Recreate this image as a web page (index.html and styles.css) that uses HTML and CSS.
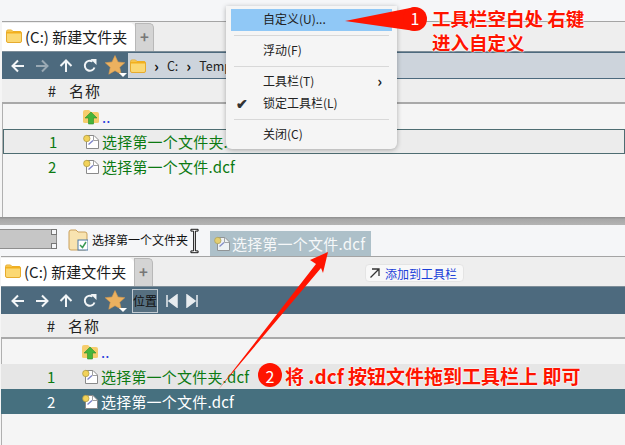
FILE: index.html
```html
<!DOCTYPE html>
<html lang="zh">
<head>
<meta charset="utf-8">
<title>工具栏</title>
<link rel="stylesheet" href="styles.css">
</head>
<body>
<svg class="defs" width="0" height="0">
  <defs>
    <symbol id="folder" viewBox="0 0 16 14">
      <path d="M.5 2.5Q.5 1 2 1H5.5L7 2.5H14Q15.5 2.5 15.5 4V12Q15.5 13.5 14 13.5H2Q.5 13.5 .5 12Z" fill="#fbd873" stroke="#e6ab2e"/>
      <path d="M1 3.5H15" stroke="#f2b01e" stroke-width="2"/>
    </symbol>
    <symbol id="dcf" viewBox="0 0 16 16">
      <path d="M3.500 1.500H11L15.500 6V14.500H3.500Z" fill="#fff" stroke="#8a8a8a"/>
      <path d="M10.500 1.500V6.500H15.500" fill="none" stroke="#a0a0a0"/>
      <circle cx="3.800" cy="4.500" r="3.200" fill="#f2d25a" stroke="#a9963e" stroke-width=".7"/>
      <path d="M5.500 10.500L10 6.500" stroke="#7b82c8" stroke-width="1.300"/>
    </symbol>
    <symbol id="up" viewBox="0 0 16 16">
      <path d="M0 3Q0 1 2 1H6L8 3H14Q16 3 16 5V13Q16 14 14 14H2Q0 14 0 13Z" fill="#f6cd6c"/>
      <path d="M8 3L14 9H10.500V15H5.500V9H2Z" fill="#47b53a" stroke="#2d8f2a" stroke-width=".6"/>
    </symbol>
    <symbol id="star" viewBox="0 0 20 20">
      <path d="M10 .5L13 7 19.800 7.700 14.700 12.300 16.200 19.200 10 15.700 3.800 19.200 5.300 12.300 .2 7.700 7 7Z" fill="#ecb15f" stroke="#d99c50" stroke-width=".6"/>
    </symbol>
    <symbol id="left" viewBox="0 0 14 14"><path d="M13 7H2M7 1.500L1.500 7 7 12.500" fill="none" stroke="currentColor" stroke-width="2"/></symbol>
    <symbol id="right" viewBox="0 0 14 14"><path d="M1 7H12M7 1.500L12.500 7 7 12.500" fill="none" stroke="currentColor" stroke-width="2"/></symbol>
    <symbol id="upar" viewBox="0 0 14 14"><path d="M7 13V2M1.500 7L7 1.500 12.500 7" fill="none" stroke="currentColor" stroke-width="2"/></symbol>
    <symbol id="refresh" viewBox="0 0 14 14"><path d="M11.500 8.500A5 5 0 1 1 9.500 2.500" fill="none" stroke="currentColor" stroke-width="2"/><path d="M7.500 0H13.500V6Z" fill="currentColor"/></symbol>
  </defs>
</svg>

<main class="app">
  <section class="pane first">
    <div class="topstrip"></div>
    <div class="tabs">
      <div class="tab"><svg class="i16"><use href="#folder"/></svg><span>(C:) 新建文件夹</span></div>
      <div class="plus">+</div>
    </div>
    <div class="toolbar">
      <svg class="nav"><use href="#left"/></svg>
      <svg class="nav dim"><use href="#right"/></svg>
      <svg class="nav"><use href="#upar"/></svg>
      <svg class="nav"><use href="#refresh"/></svg>
      <div class="fav"><svg class="star"><use href="#star"/></svg><i class="caret"></i></div>
      <div class="address">
        <svg class="i16"><use href="#folder"/></svg>
        <b class="sep">›</b><span>C:</span><b class="sep">›</b><span>Temp</span>
      </div>
    </div>
    <div class="head"><span class="num">#</span><span class="name">名称</span></div>
    <div class="row parent"><span class="num"></span><svg class="i16"><use href="#up"/></svg><span class="dots">..</span></div>
    <div class="row file framed"><span class="num">1</span><svg class="i16"><use href="#dcf"/></svg><span>选择第一个文件夹.dcf</span></div>
    <div class="row file"><span class="num">2</span><svg class="i16"><use href="#dcf"/></svg><span>选择第一个文件.dcf</span></div>
  </section>

  <div class="splitter"></div>

  <section class="pane second">
    <div class="dragbar">
      <div class="grip"></div>
      <div class="barbtn">
        <svg class="bigfolder" viewBox="0 0 20 22"><path d="M1 3Q1 1 3 1H8L10 3H17Q19 3 19 5V19Q19 21 17 21H3Q1 21 1 19Z" fill="#f8e3b0" stroke="#c9a05c"/><rect x="10" y="11" width="10" height="10" fill="#fff" stroke="#4d7aa5"/><path d="M12 16L14.500 18.500 18 13" fill="none" stroke="#3a9a55" stroke-width="1.500"/></svg>
        <span>选择第一个文件夹</span>
      </div>
      <svg class="cursor" viewBox="0 0 10 28"><path d="M1 1H9V3H6V25H9V27H1V25H4V3H1Z" fill="#fff" stroke="#000"/></svg>
      <div class="ghost"><svg class="i16"><use href="#dcf"/></svg><span>选择第一个文件.dcf</span></div>
    </div>
    <div class="tabs">
      <div class="tab"><svg class="i16"><use href="#folder"/></svg><span>(C:) 新建文件夹</span></div>
      <div class="plus">+</div>
    </div>
    <div class="toolbar">
      <svg class="nav"><use href="#left"/></svg>
      <svg class="nav"><use href="#right"/></svg>
      <svg class="nav"><use href="#upar"/></svg>
      <svg class="nav"><use href="#refresh"/></svg>
      <div class="fav"><svg class="star"><use href="#star"/></svg><i class="caret"></i></div>
      <div class="locbtn">位置</div>
      <svg class="skip" viewBox="0 0 12 14"><path d="M1 1V13M11 1V13L3 7Z" fill="#e8ecef" stroke="#e8ecef" stroke-width="1.500"/></svg>
      <svg class="skip" viewBox="0 0 12 14"><path d="M11 1V13M1 1V13L9 7Z" fill="#e8ecef" stroke="#e8ecef" stroke-width="1.500"/></svg>
    </div>
    <div class="head"><span class="num">#</span><span class="name">名称</span></div>
    <div class="row parent"><span class="num"></span><svg class="i16"><use href="#up"/></svg><span class="dots">..</span></div>
    <div class="row file shaded"><span class="num">1</span><svg class="i16"><use href="#dcf"/></svg><span>选择第一个文件夹.dcf</span></div>
    <div class="row selected"><span class="num">2</span><svg class="i16"><use href="#dcf"/></svg><span>选择第一个文件.dcf</span></div>
  </section>
</main>

<div class="menu">
  <div class="mi hot">自定义(U)...</div>
  <hr>
  <div class="mi">浮动(F)</div>
  <hr>
  <div class="mi">工具栏(T)<b class="more">›</b></div>
  <div class="mi"><b class="tick">✔</b>锁定工具栏(L)</div>
  <hr>
  <div class="mi">关闭(C)</div>
</div>

<div class="addhint"><svg class="addarrow" viewBox="0 0 12 12"><path d="M1.500 10.500L10 2M3 2H10V9" fill="none" stroke="#333" stroke-width="1.300"/></svg><span>添加到工具栏</span></div>

<svg class="overlay" viewBox="0 0 625 445">
  <path d="M345 21L415 7V31Z" fill="#ff1400"/>
  <circle cx="415" cy="19" r="12" fill="#ff1400"/>
  <path d="M218 390L316 264 310 260 328 252 323 273 321 268Z" fill="#ff1400"/>
  <circle cx="270" cy="375" r="12" fill="#ff1400"/>
</svg>
<div class="note n1"><span class="badge-num">1</span>工具栏空白处 右键</div>
<div class="note n1b">进入自定义</div>
<div class="note n2"><span class="badge-num">2</span>将 .dcf 按钮文件拖到工具栏上 即可</div>
</body>
</html>
```

FILE: styles.css
```css
* { box-sizing: border-box; }
html, body { margin: 0; padding: 0; }
body {
  width: 625px;
  height: 445px;
  overflow: hidden;
  position: relative;
  background: #f5f5f5;
  color: #222;
  font-family: "Noto Sans CJK SC", "Liberation Sans", sans-serif;
  font-size: 15px;
}
.defs { position: absolute; }
.app { display: flex; flex-direction: column; height: 445px; }
.pane { display: flex; flex-direction: column; }
.first {
  height: 217px;
  padding-left: 2px;
  background: linear-gradient(to right, #f5f5f5 2px, #b0b0b0 2px, #b0b0b0 3px, #f5f5f5 3px);
}
.second {
  flex: 1;
  padding-left: 1px;
  background: linear-gradient(to right, #f5f5f5 1px, #b0b0b0 1px, #b0b0b0 2px, #f5f5f5 2px);
}
.topstrip { height: 21px; margin-left: -2px; background: #f5f6f8; }
.splitter {
  height: 8px;
  background: linear-gradient(#8d8d8d, #a8a8a8 30%, #b4b4b4);
}
.tabs {
  height: 30px;
  display: flex;
  align-items: flex-end;
  background: #eeeeee;
  border-top: 1px solid #a4a4a4;
}
.tab {
  width: 133px;
  height: 28px;
  background: #fff;
  border-radius: 0 5px 0 0;
  display: flex;
  align-items: center;
  gap: 3px;
  padding-left: 4px;
  padding-bottom: 2px;
  font-size: 15px;
  color: #1c1c1c;
  white-space: nowrap;
}
.plus {
  width: 19px;
  height: 28px;
  background: #d4d4d4;
  border: 1px solid #b8b8b8;
  border-bottom: 0;
  border-radius: 0 5px 0 0;
  color: #777;
  font-size: 15px;
  font-weight: 700;
  text-align: center;
  line-height: 26px;
}
.i16 { width: 16px; height: 16px; flex: none; }
.toolbar {
  height: 28px;
  background: #4d6a7e;
  border-top: 1px solid #7d8d98;
  display: flex;
  align-items: center;
  color: #fff;
}
.nav { width: 14px; height: 14px; margin-left: 10px; flex: none; color: #f2f5f7; }
.nav.dim { color: #99a9b4; }
.first .toolbar .nav:first-child { margin-left: 9px; }
.fav { position: relative; width: 22px; height: 22px; margin-left: 8px; flex: none; }
.star { width: 20px; height: 20px; display: block; }
.caret {
  position: absolute;
  left: 14px;
  top: 18px;
  border: 4px solid transparent;
  border-top-color: #fff;
  border-bottom: 0;
}
.address {
  flex: 1;
  height: 25px;
  margin-left: 1px;
  background: #cdd4dc;
  display: flex;
  align-items: center;
  gap: 8px;
  padding-left: 2px;
  color: #222;
  font-size: 12.500px;
}
.sep { font-size: 15px; color: #111; }
.head {
  height: 25px;
  background: #eeeeee;
  border-bottom: 2px solid #a9a9a9;
  display: flex;
  align-items: center;
  font-size: 15px;
}
.head .num { width: 60px; padding-right: 6px; text-align: right; }
.head .name { padding-left: 7px; letter-spacing: 1px; }
.row {
  height: 25px;
  display: flex;
  align-items: center;
  font-size: 15px;
  white-space: nowrap;
}
.row .num { width: 81px; padding-left: 46px; flex: none; }
.row span:last-child { margin-left: 3px; letter-spacing: .2px; }
.dots { color: #2a3bdc; }
.file { color: #0c7a12; }
.framed { background: #ececec; border: 1px solid #4e6d72; margin-left: 1px; }
.framed .num { width: 79px; padding-left: 45px; }
.shaded { background: #e6e6e6; }
.selected { background: #46707f; color: #fff; }
.dragbar {
  height: 31px;
  margin-left: -1px;
  display: flex;
  align-items: center;
  background: #f5f6f8;
  position: relative;
}
.grip {
  width: 57px;
  height: 20px;
  margin-top: -4px;
  background: #c6c6c6;
  border: 1px solid #8e8e8e;
  border-left: 0;
  position: relative;
}
.grip::before, .grip::after {
  content: "";
  position: absolute;
  right: -1px;
  width: 4px;
  height: 4px;
  background: #f5f6f8;
  border: 1px solid #777;
}
.grip::before { top: -1px; }
.grip::after { bottom: -1px; }
.barbtn {
  display: flex;
  align-items: center;
  gap: 4px;
  margin-left: 11px;
  margin-top: -2px;
  font-size: 12px;
  color: #111;
  white-space: nowrap;
}
.bigfolder { width: 20px; height: 22px; flex: none; }
.cursor { width: 9px; height: 28px; margin-left: 2px; flex: none; }
.ghost {
  width: 161px;
  height: 25px;
  margin-left: 11px;
  margin-top: 6px;
  background: #adc0c9;
  color: #f6f8f9;
  display: flex;
  align-items: center;
  gap: 2px;
  padding-left: 4px;
  font-size: 15px;
  letter-spacing: .2px;
  white-space: nowrap;
}
.ghost .i16 { opacity: .8; }
.locbtn {
  width: 26px;
  height: 24px;
  margin-left: 5px;
  background: #566f80;
  border: 1px solid #c2cbd2;
  color: #101010;
  font-size: 12px;
  line-height: 21px;
  text-align: center;
  flex: none;
  white-space: nowrap;
}
.skip { width: 12px; height: 14px; margin-left: 8px; flex: none; }
.menu {
  position: absolute;
  left: 226px;
  top: 6px;
  width: 171px;
  height: 143px;
  padding: 3px 5px;
  background: #f5f5f5;
  border-radius: 0 0 6px 6px;
  box-shadow: 0 1px 5px rgba(0, 0, 0, .3);
  font-size: 12px;
  color: #222;
}
.menu hr { height: 1px; border: 0; margin: 4px 3px; background: #d8d8d8; }
.mi { height: 22px; line-height: 20px; padding-left: 32px; position: relative; }
.hot { background: #90c8f6; }
.more { position: absolute; right: 10px; top: 0; font-size: 15px; }
.tick { position: absolute; left: 5px; top: 0; font-size: 14px; color: #333; }
.addhint {
  position: absolute;
  left: 365px;
  top: 264px;
  width: 99px;
  height: 18px;
  background: #f8f8f8;
  border: 1px solid #e4e4e4;
  border-radius: 4px;
  display: flex;
  align-items: center;
  gap: 4px;
  padding-left: 3px;
  color: #1c3fd8;
  font-size: 12px;
  white-space: nowrap;
}
.addarrow { width: 12px; height: 12px; flex: none; }
.overlay { position: absolute; left: 0; top: 0; width: 625px; height: 445px; pointer-events: none; }
.note {
  position: absolute;
  color: #ff1400;
  font-size: 18.500px;
  line-height: 26px;
  font-weight: 700;
  white-space: nowrap;
  text-shadow: 0 0 2px #fff, 0 0 2px #fff;
}
.badge-num {
  position: absolute;
  top: 0;
  width: 24px;
  text-align: center;
  color: #fff;
  font-weight: 400;
  font-size: 16px;
  text-shadow: none;
}
.n1 { left: 432px; top: 5px; }
.n1 .badge-num { left: -29px; }
.n1b { left: 432px; top: 29px; }
.n2 { left: 285px; top: 363px; font-size: 19px; }
.n2 .badge-num { left: -27px; }
```
